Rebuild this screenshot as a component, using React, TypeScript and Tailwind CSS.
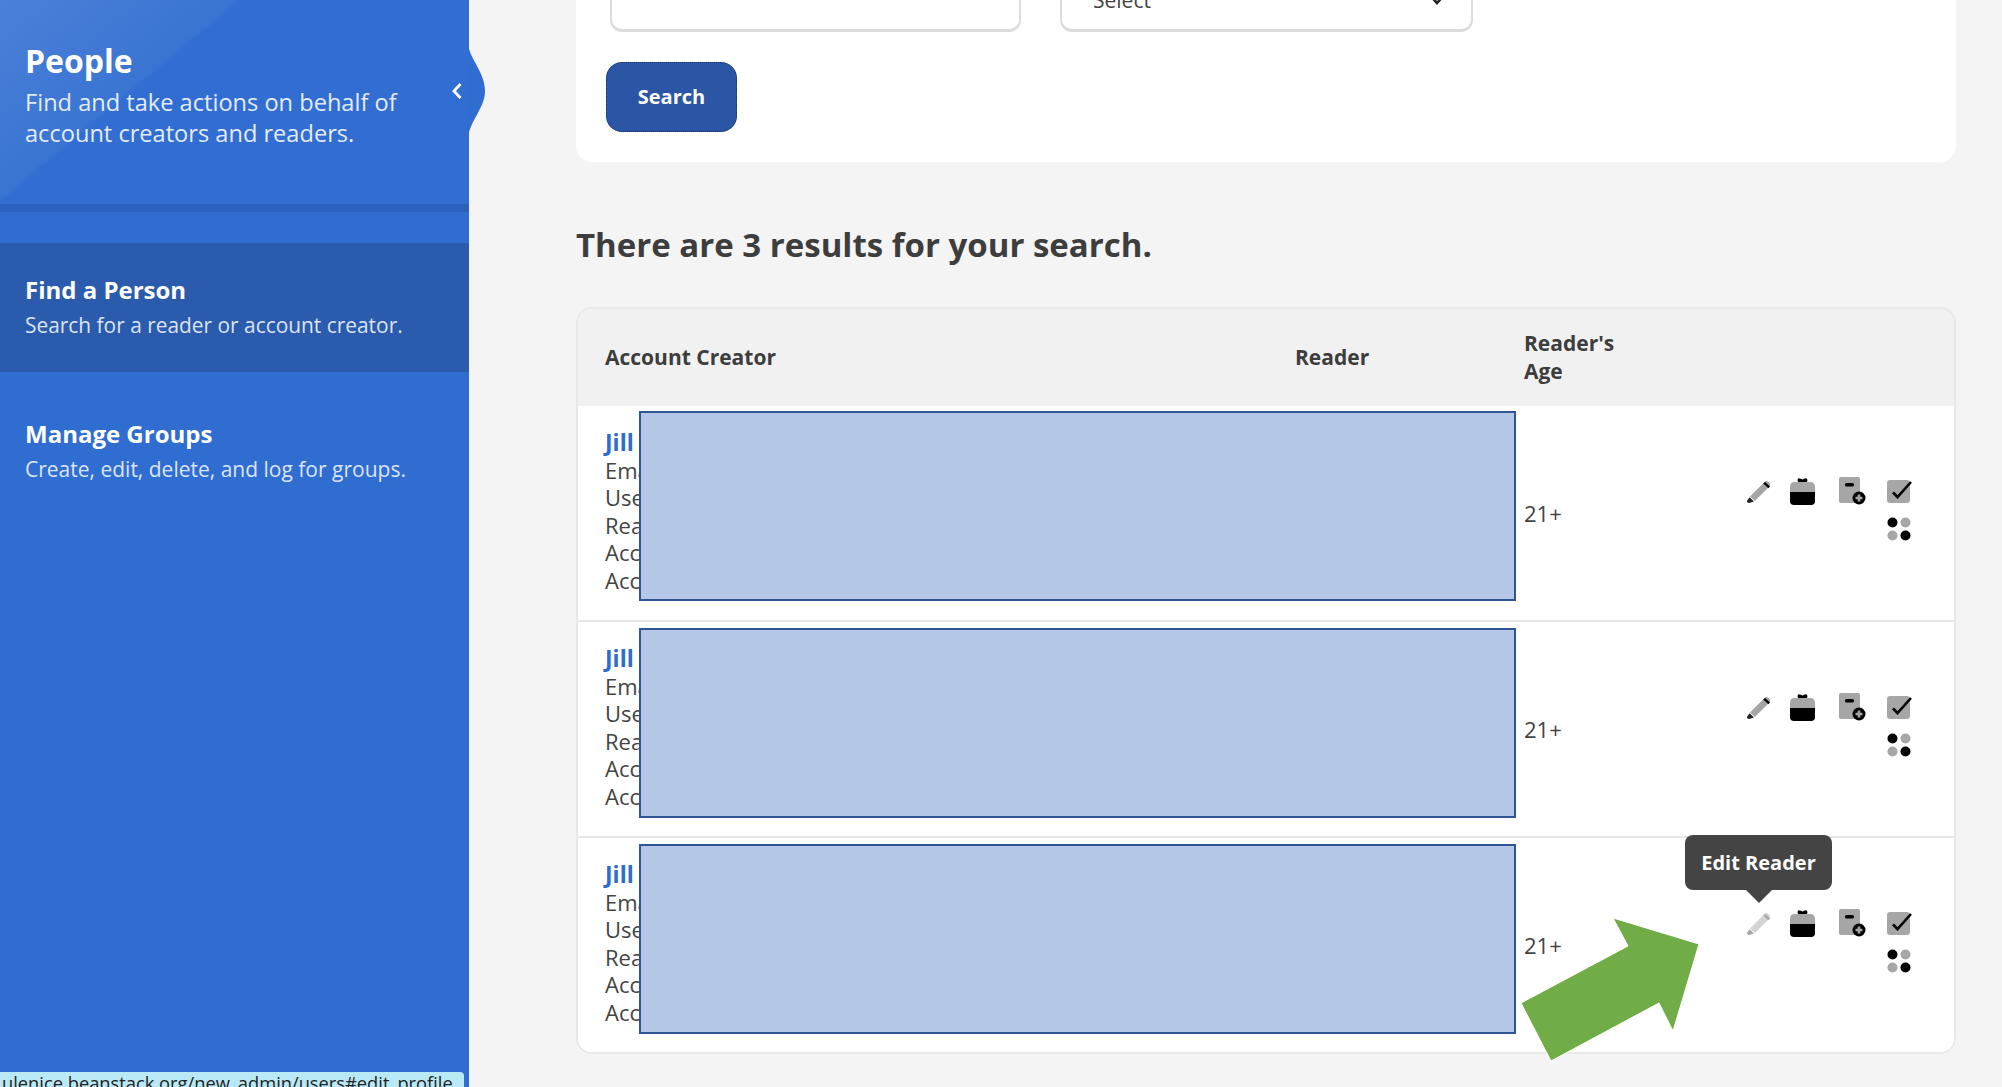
import React from "react";

const PencilIcon = ({ light }: { light?: boolean }) => (
  <svg width="26" height="24" viewBox="0 0 26 24" className="mr-[18px]">
    <path d="M4 17.5 L18.5 3 Q20.5 1.2 22.5 3 L23.5 4 Q25 6 23.3 7.8 L8.8 22 L6 19.5 Z" fill={light ? "#d4d4d4" : "#a6a6a6"} />
    <path d="M17.2 4.5 L19 3 L24 7.6 L22.4 9.2 Z" fill={light ? "#a6a6a6" : "#000"} />
    <path d="M3.6 18.2 L7.9 22.4 L3 24 Q0.6 23.6 1.2 21.4 Z" fill={light ? "#a6a6a6" : "#222"} />
  </svg>
);

const BagIcon = () => (
  <svg width="25" height="28" viewBox="0 0 25 28" className="mr-[24px]">
    <path d="M7.5 3 Q8 0.5 10 1.5 L12.5 2.5 L15 1.5 Q17 0.5 17.5 3 L17 5 L8 5 Z" fill="#000" />
    <path d="M5 5 H20 Q25 5 25 10 V15 H0 V10 Q0 5 5 5 Z" fill="#a6a6a6" />
    <path d="M0 15 H25 V24 Q25 28 21 28 H4 Q0 28 0 24 Z" fill="#000" />
  </svg>
);

const DocIcon = () => (
  <svg width="27" height="28" viewBox="0 0 27 28" className="mr-[21px]">
    <rect x="0" y="0" width="21" height="26" rx="2" fill="#a6a6a6" />
    <rect x="6" y="6" width="9" height="3.4" rx="1.5" fill="#000" />
    <circle cx="20" cy="21" r="6.5" fill="#000" />
    <path d="M20 17.5 V24.5 M16.5 21 H23.5" stroke="#a6a6a6" strokeWidth="2.6" />
  </svg>
);

const CheckIcon = () => (
  <svg width="25" height="24" viewBox="0 0 25 24">
    <rect x="0" y="1" width="23" height="23" rx="3" fill="#a6a6a6" />
    <path d="M6 13.5 L10.5 18 L24 3" fill="none" stroke="#000" strokeWidth="2.6" />
  </svg>
);

const DotsIcon = () => (
  <svg width="25" height="24" viewBox="0 0 25 24" className="mt-[12px]">
    <circle cx="5.5" cy="5.5" r="5" fill="#000" />
    <circle cx="18.5" cy="5.5" r="5" fill="#a6a6a6" />
    <circle cx="5.5" cy="18.5" r="5" fill="#a6a6a6" />
    <circle cx="18.5" cy="18.5" r="5" fill="#000" />
  </svg>
);

const LINES = ["Email:", "Username:", "Reader:", "Account:", "Account:"];

function Row({ first, last, hover }: { first?: boolean; last?: boolean; hover?: boolean }) {
  return (
    <div className={`relative grid grid-cols-[690px_229px_1fr] items-center bg-white pl-[27px] pr-[42px] ${last ? "h-[214px]" : "h-[216px] border-b-2 border-[#e6e6e6]"}`}>
      <div className="mb-[3px] text-[22px] leading-[27.5px] text-[#444]">
        <a className="block text-[23px] leading-[27.5px] font-bold text-[#2f6bd0]">Jill</a>
        {LINES.map((l, i) => (
          <div key={i}>{l}</div>
        ))}
      </div>
      <div />
      <div className="flex items-center justify-between text-[22px] text-[#444]">
        <span>21+</span>
        <div className="relative flex flex-col items-end mt-[-8px]">
          <div className="flex items-center">
            <PencilIcon light={hover} />
            <BagIcon />
            <DocIcon />
            <CheckIcon />
          </div>
          <DotsIcon />
          {hover && (
            <div className="absolute left-[-61px] top-[-74px] flex flex-col items-center">
              <div className="w-[147px] h-[55px] rounded-lg bg-[#444] text-white text-[20px] font-bold flex items-center justify-center">Edit Reader</div>
              <div className="w-0 h-0 border-x-[13px] border-x-transparent border-t-[13px] border-t-[#444]" />
            </div>
          )}
        </div>
      </div>
      {/* redaction block */}
      <div className={`absolute left-[61px] w-[877px] h-[190px] bg-[#b4c7e7] border-2 border-[#2f5597] ${first ? "top-[5px]" : "top-[6px]"}`} />
    </div>
  );
}

export default function App() {
  return (
    <div className="relative flex h-[1087px] overflow-hidden bg-[#f4f4f4] font-['Open_Sans',sans-serif]">
      {/* sidebar */}
      <aside className="relative w-[469px] shrink-0 bg-[#306dd1] text-white">
        <div className="h-[212px] border-b-8 border-[#2c62bb] px-[25px] pt-[41px] bg-[linear-gradient(140deg,#4a80d8_0%,#3a75d3_33%,#326ed1_34%)]">
          <h1 className="text-[32px] leading-[40px] font-bold">People</h1>
          <p className="mt-[6px] text-[23.6px] leading-[31px] text-[#e3ebf9] whitespace-pre-line">
            {"Find and take actions on behalf of\naccount creators and readers."}
          </p>
        </div>
        <div className="mt-[31px] h-[129px] bg-[#2b5bad] px-[25px] pt-[31px]">
          <div className="text-[24px] leading-[32px] font-bold">Find a Person</div>
          <div className="mt-[3px] text-[20.9px] leading-[32px] text-[#dbe4f5]">Search for a reader or account creator.</div>
        </div>
        <div className="h-[129px] px-[25px] pt-[46px]">
          <div className="text-[24px] leading-[32px] font-bold">Manage Groups</div>
          <div className="mt-[3px] text-[21px] leading-[32px] text-[#dbe4f5]">Create, edit, delete, and log for groups.</div>
        </div>
        {/* collapse tab */}
        <svg width="18" height="94" viewBox="0 0 18 94" className="absolute left-[468px] top-[44px]">
          <path d="M0 0 C2 16 17 28 17 47 C17 64 2 76 0 94 Z" fill="#306dd1" />
        </svg>
        <svg width="12" height="18" viewBox="0 0 12 18" className="absolute left-[451px] top-[82px]">
          <path d="M9.5 2 L3 9 L9.5 16" fill="none" stroke="#fff" strokeWidth="2.8" />
        </svg>
        {/* browser status link */}
        <div className="absolute left-0 bottom-0 w-[464px] h-[15px] overflow-hidden rounded-tr bg-[#b9e9f5] text-[18.3px] leading-[22px] text-[#222] whitespace-nowrap pl-[2px]">
          ulenice.beanstack.org/new_admin/users#edit_profile
        </div>
      </aside>

      {/* main */}
      <main className="flex-1 min-w-0 pl-[107px] pr-[46px]">
        <section className="flex flex-col items-start rounded-b-2xl bg-white h-[162px] pl-[30px]">
          <div className="flex gap-[39px] pl-[4px] -mt-[30px]">
            <div className="w-[411px] h-[62px] rounded-xl bg-white border-2 border-b-[3px] border-[#dcdcdc]" />
            <div className="relative w-[413px] h-[62px] rounded-xl bg-white border-2 border-b-[3px] border-[#dcdcdc] pl-[31px] flex items-center justify-between pr-[28px] text-[21px] text-[#444]">
              <span>Select</span>
              <svg width="12" height="10" viewBox="0 0 12 10">
                <path d="M1.5 2 L6 7 L10.5 2" fill="none" stroke="#222" strokeWidth="2.6" />
              </svg>
            </div>
          </div>
          <button className="mt-[30px] block w-[131px] h-[70px] rounded-2xl bg-[#2a56a5] border border-dotted border-[#16305f] text-white text-[20px] font-bold">
            Search
          </button>
        </section>

        <h2 className="mt-[60px] h-[46px] text-[33px] leading-[46px] font-bold text-[#3d3d3d] whitespace-nowrap">
          There are 3 results for your search.
        </h2>

        <section className="mt-[39px] rounded-2xl border-2 border-[#e8e8e8] overflow-hidden bg-white w-[1380px]">
          <div className="grid grid-cols-[690px_229px_1fr] items-center h-[97px] bg-[#f1f1f1] pl-[27px] pb-[2px] text-[21px] leading-[28px] font-bold text-[#3d3d3d]">
            <div>Account Creator</div>
            <div>Reader</div>
            <div>
              Reader's
              <br />
              Age
            </div>
          </div>
          <Row first />
          <Row />
          <Row last hover />
        </section>
      </main>

      {/* annotation arrow */}
      <svg width="200" height="160" viewBox="1510 910 200 160" className="absolute left-[1510px] top-[910px]">
        <path d="M1613 918 L1699 944 L1673 1031 L1659 1003 L1551 1061 L1521 1003 L1628 946 Z" fill="#70ad47" stroke="#fff" strokeWidth="1" />
      </svg>
    </div>
  );
}
